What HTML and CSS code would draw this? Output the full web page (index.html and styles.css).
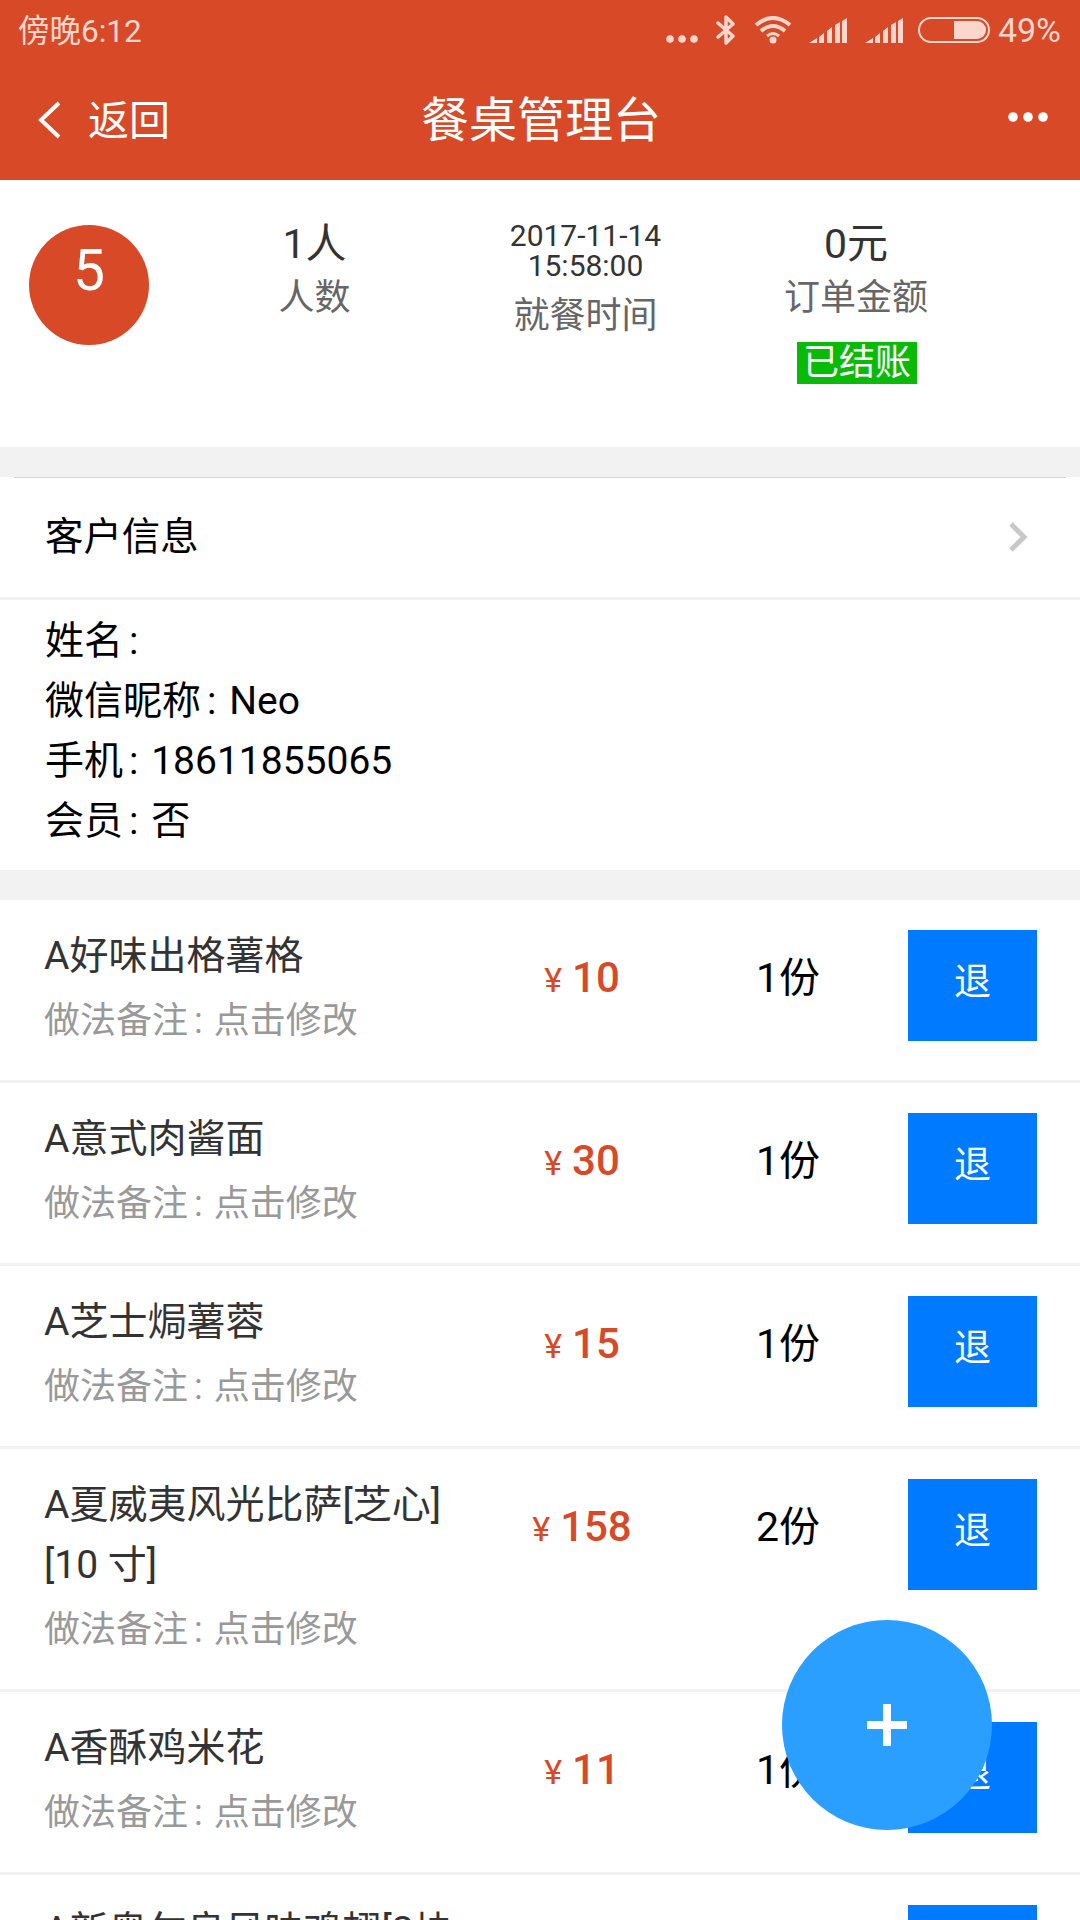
FILE: index.html
```html
<!DOCTYPE html>
<html lang="zh-CN">
<head>
<meta charset="utf-8">
<title>餐桌管理台</title>
<link rel="stylesheet" href="styles.css">
</head>
<body>
<div class="page">
  <header class="top">
    <div class="status">
      <span class="clock">傍晚6:12</span>
      <div class="status-icons">
        <svg class="ic-dots" width="32" height="10" viewBox="0 0 32 10"><circle class="solid" cx="4" cy="5" r="3.800"/><circle class="solid" cx="16" cy="5" r="3.800"/><circle class="solid" cx="28" cy="5" r="3.800"/></svg>
        <svg class="ic-bt" width="20" height="30" viewBox="0 0 20 30"><path class="line" d="M2 8 L17 21 L10 28 L10 2 L17 9 L2 22" stroke-width="3.500" stroke-linejoin="round" stroke-linecap="round"/></svg>
        <svg class="ic-wifi" width="38" height="28" viewBox="0 0 38 28"><path class="line" d="M2 9 Q19 -5 36 9" stroke-width="4"/><path class="line" d="M7 15 Q19 5 31 15" stroke-width="4"/><path class="line" d="M13 20 Q19 15 25 20" stroke-width="3"/><circle class="solid" cx="19" cy="24" r="3.500"/></svg>
        <svg class="ic-signal" width="38" height="26" viewBox="0 0 38 26"><path class="solid" d="M0 25 L8 20 V25 Z M10 19 L15 15 V25 H10 Z M18 13 L23 9 V25 H18 Z M26 7 L31 4 V25 H26 Z M33 3 L38 0 V25 H33 Z"/></svg>
        <svg class="ic-signal" width="38" height="26" viewBox="0 0 38 26"><path class="solid" d="M0 25 L8 20 V25 Z M10 19 L15 15 V25 H10 Z M18 13 L23 9 V25 H18 Z M26 7 L31 4 V25 H26 Z M33 3 L38 0 V25 H33 Z"/></svg>
        <div class="battery"><div class="battery-level"></div></div>
        <span class="percent">49%</span>
      </div>
    </div>
    <nav class="bar">
      <div class="back">
        <svg width="26" height="40" viewBox="0 0 26 40"><path d="M23 3 L5 20 L23 37" fill="none" stroke="#fff" stroke-width="4"/></svg>
        <span>返回</span>
      </div>
      <h1 class="title">餐桌管理台</h1>
      <svg class="more" width="40" height="10" viewBox="0 0 40 10"><circle cx="5" cy="5" r="4.800"/><circle cx="20" cy="5" r="4.800"/><circle cx="35" cy="5" r="4.800"/></svg>
    </nav>
  </header>

  <section class="summary">
    <div class="table-no">5</div>
    <div class="stat stat-people"><b>1人</b><span>人数</span></div>
    <div class="stat stat-time"><b class="when">2017-11-14<br>15:58:00</b><span>就餐时间</span></div>
    <div class="stat stat-amount"><b>0元</b><span>订单金额</span><em class="paid">已结账</em></div>
  </section>

  <section class="customer">
    <div class="customer-head">
      <span>客户信息</span>
      <svg width="20" height="30" viewBox="0 0 20 30"><path d="M3 2 L16 15 L3 28" fill="none" stroke="#c7c7cc" stroke-width="5"/></svg>
    </div>
    <div class="customer-body">
      <p>姓名<span class="colon">:</span></p>
      <p>微信昵称<span class="colon">:</span> Neo</p>
      <p>手机<span class="colon">:</span> 18611855065</p>
      <p>会员<span class="colon">:</span> 否</p>
    </div>
  </section>

  <section class="dishes">
    <article class="dish">
      <div class="dish-main"><div class="dish-name">A好味出格薯格</div><div class="dish-note">做法备注<span class="colon">:</span> 点击修改</div></div>
      <div class="dish-price"><i>¥</i>10</div><div class="dish-qty">1份</div><button class="refund">退</button>
    </article>
    <article class="dish">
      <div class="dish-main"><div class="dish-name">A意式肉酱面</div><div class="dish-note">做法备注<span class="colon">:</span> 点击修改</div></div>
      <div class="dish-price"><i>¥</i>30</div><div class="dish-qty">1份</div><button class="refund">退</button>
    </article>
    <article class="dish">
      <div class="dish-main"><div class="dish-name">A芝士焗薯蓉</div><div class="dish-note">做法备注<span class="colon">:</span> 点击修改</div></div>
      <div class="dish-price"><i>¥</i>15</div><div class="dish-qty">1份</div><button class="refund">退</button>
    </article>
    <article class="dish">
      <div class="dish-main"><div class="dish-name">A夏威夷风光比萨[芝心]<br>[10 寸]</div><div class="dish-note">做法备注<span class="colon">:</span> 点击修改</div></div>
      <div class="dish-price"><i>¥</i>158</div><div class="dish-qty">2份</div><button class="refund">退</button>
    </article>
    <article class="dish">
      <div class="dish-main"><div class="dish-name">A香酥鸡米花</div><div class="dish-note">做法备注<span class="colon">:</span> 点击修改</div></div>
      <div class="dish-price"><i>¥</i>11</div><div class="dish-qty">1份</div><button class="refund">退</button>
    </article>
    <article class="dish">
      <div class="dish-main"><div class="dish-name">A新奥尔良风味鸡翅[2块</div><div class="dish-note">做法备注<span class="colon">:</span> 点击修改</div></div>
      <div class="dish-price"><i>¥</i>12</div><div class="dish-qty">1份</div><button class="refund">退</button>
    </article>
  </section>

  <button class="fab" aria-label="添加">
    <svg width="40" height="42" viewBox="0 0 40 42"><path d="M0 17 H40 V25 H0 Z M16 0 H24 V42 H16 Z" fill="#fff"/></svg>
  </button>
</div>
</body>
</html>
```

FILE: styles.css
```css
* { box-sizing: border-box; }
html, body { margin: 0; padding: 0; }
body {
  font-family: Roboto, "Noto Sans CJK SC", sans-serif;
  background: #fff;
  color: #000;
}
.page {
  position: relative;
  width: 1080px;
  height: 1920px;
  overflow: hidden;
}

/* Status bar and navigation */
.top { height: 180px; background: #d84a27; color: #fff; }
.status {
  height: 60px;
  padding: 0 19px 0 18px;
  display: flex;
  align-items: center;
  justify-content: space-between;
  color: #fbd6cc;
}
.clock { font-size: 31.5px; margin-bottom: 4px; }
.percent { font-size: 34px; }
.status-icons { display: flex; align-items: center; }
.solid { fill: #fbd6cc; }
.line { fill: none; stroke: #fbd6cc; }
.ic-dots { margin-top: 18px; margin-right: 18px; }
.ic-bt { margin-right: 18px; }
.ic-wifi { margin-right: 17px; margin-top: -1px; }
.ic-signal { margin-right: 18px; margin-top: 1px; }
.ic-signal + .ic-signal { margin-right: 15px; }
.battery {
  width: 72px;
  height: 26px;
  border: 2px solid #fbd6cc;
  border-radius: 13px;
  margin-right: 8px;
  padding: 2px;
  display: flex;
  justify-content: flex-end;
}
.battery-level { width: 32px; background: #fbd6cc; border-radius: 0 10px 10px 0; }
.bar {
  position: relative;
  height: 120px;
  display: flex;
  align-items: center;
  justify-content: space-between;
  padding: 0 32px 0 36px;
}
.back { display: flex; align-items: center; gap: 26px; font-size: 41px; }
.back span { padding-bottom: 7px; }
.title {
  margin: 0 0 9px 2px;
  position: absolute;
  left: 0;
  right: 0;
  text-align: center;
  font-size: 48px;
  font-weight: 400;
}
.more { fill: #fff; margin-bottom: 6px; }

/* Table summary */
.summary {
  position: relative;
  height: 267px;
  display: grid;
  grid-template-columns: 179px 271px 271px 270px;
  padding-top: 45px;
  align-items: start;
}
.table-no {
  width: 120px;
  height: 120px;
  margin-left: 29px;
  border-radius: 50%;
  background: #d84a27;
  color: #fff;
  font-size: 57px;
  text-align: center;
  line-height: 92px;
}
.stat { display: flex; flex-direction: column; align-items: center; color: #666; font-size: 36px; }
.stat b { font-weight: 400; color: #333; font-size: 41px; line-height: 48px; margin-top: -5px; }
.stat span { line-height: 48px; margin-top: 6px; }
.stat b.when { font-size: 30px; line-height: 30px; text-align: center; margin-top: -4px; }
.stat b.when + span { margin-top: 11px; }
.paid {
  font-style: normal;
  background: #09bb07;
  color: #fff;
  width: 120px;
  height: 42px;
  line-height: 42px;
  text-align: center;
  margin: 20px 0 0 2px;
}

/* Customer card */
.customer {
  border-top: 30px solid #f2f2f2;
  border-bottom: 30px solid #f2f2f2;
  position: relative;
}
.customer::before {
  content: "";
  position: absolute;
  left: 14px;
  right: 14px;
  top: 0;
  height: 1px;
  background: #d4d4d4;
}
.customer-head {
  height: 123px;
  display: flex;
  align-items: center;
  justify-content: space-between;
  padding: 0 52px 0 45px;
  font-size: 38.4px;
  border-bottom: 3px solid #f2f2f2;
}
.customer-head span { padding-bottom: 8px; }
.customer-body { padding: 11px 45px 19px; font-size: 39px; }
.customer-body p { margin: 0; line-height: 60px; }
.colon { margin: 0 3px 0 6px; }

/* Ordered dishes */
.dish {
  display: flex;
  align-items: flex-start;
  padding: 30px 43px 0 44px;
  border-bottom: 3px solid #f2f2f2;
}
.dish-main { width: 402px; flex: none; padding-bottom: 29px; }
.dish-name { font-size: 39px; line-height: 60px; color: #333; margin-top: -4px; white-space: nowrap; }
.dish-note { font-size: 36px; line-height: 60px; color: #999; margin-top: 5px; }
.dish-note .colon { margin-right: 2px; }
.dish-price {
  width: 272px;
  flex: none;
  text-align: center;
  color: #d84a27;
  font-size: 42px;
  font-weight: 500;
  line-height: 90px;
  margin-top: 3px;
}
.dish-price i { font-style: normal; font-weight: 400; font-size: 34px; margin-right: 10px; }
.dish-qty { flex: 1; padding-left: 38px; font-size: 41px; line-height: 90px; margin-top: 3px; }
.refund {
  flex: none;
  width: 129px;
  height: 111px;
  border: 0;
  padding: 0 0 13px;
  background: #007aff;
  color: #fff;
  font: inherit;
  font-size: 37px;
}

/* Floating add button */
.fab {
  position: absolute;
  left: 782px;
  top: 1620px;
  width: 210px;
  height: 210px;
  border: 0;
  padding: 0;
  border-radius: 50%;
  background: #2a9fff;
  display: flex;
  align-items: center;
  justify-content: center;
}
```
